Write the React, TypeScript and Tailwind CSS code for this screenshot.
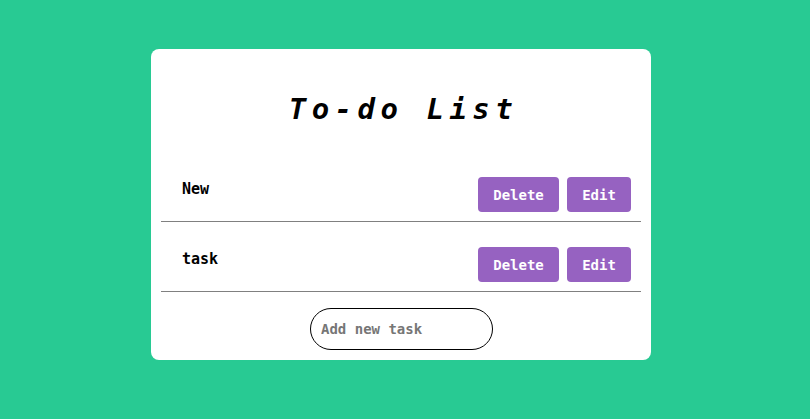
import React, { useState } from 'react';

const mono = { fontFamily: '"DejaVu Sans Mono", "Liberation Mono", monospace' };

const TaskRow: React.FC<{ text: string }> = ({ text }) => (
    <div className="flex h-[70px] items-start justify-between border-b border-[#808080] pt-[25px] pl-[21px] pr-[10px]">
        <span className="mt-[2px] text-[15px] font-bold leading-[20px] text-black">{text}</span>
        <div className="flex gap-[8px]">
            <button className="h-[35px] w-[81px] rounded-[4px] bg-[#9662c1] pt-[1px] text-[14px] font-bold text-white">Delete</button>
            <button className="h-[35px] w-[64px] rounded-[4px] bg-[#9662c1] pt-[1px] text-[14px] font-bold text-white">Edit</button>
        </div>
    </div>
);

const App: React.FC = () => {
    const [tasks] = useState(['New', 'task']);
    const [value, setValue] = useState('');

    return (
        <div className="min-h-screen w-full bg-[#28ca93] pt-[49px]" style={mono}>
            <div className="ml-[151px] w-[500px] rounded-[8px] bg-white px-[10px] pb-[10px]">
                <h1 className="flex h-[103px] items-center justify-center pt-[18px] pl-[5px] text-[29px] font-bold italic tracking-[5.5px] text-black">
                    To-do List
                </h1>
                {tasks.map((t, i) => (
                    <TaskRow key={i} text={t} />
                ))}
                <div className="flex justify-center pt-[16px] pl-[1px]">
                    <input
                        autoFocus
                        value={value}
                        onChange={e => setValue(e.target.value)}
                        placeholder="Add new task"
                        className="h-[42px] w-[183px] rounded-full border border-black pl-[10px] text-[14px] font-bold outline-none placeholder:text-[#767676]"
                        style={mono}
                    />
                </div>
            </div>
        </div>
    );
};

export default App;
